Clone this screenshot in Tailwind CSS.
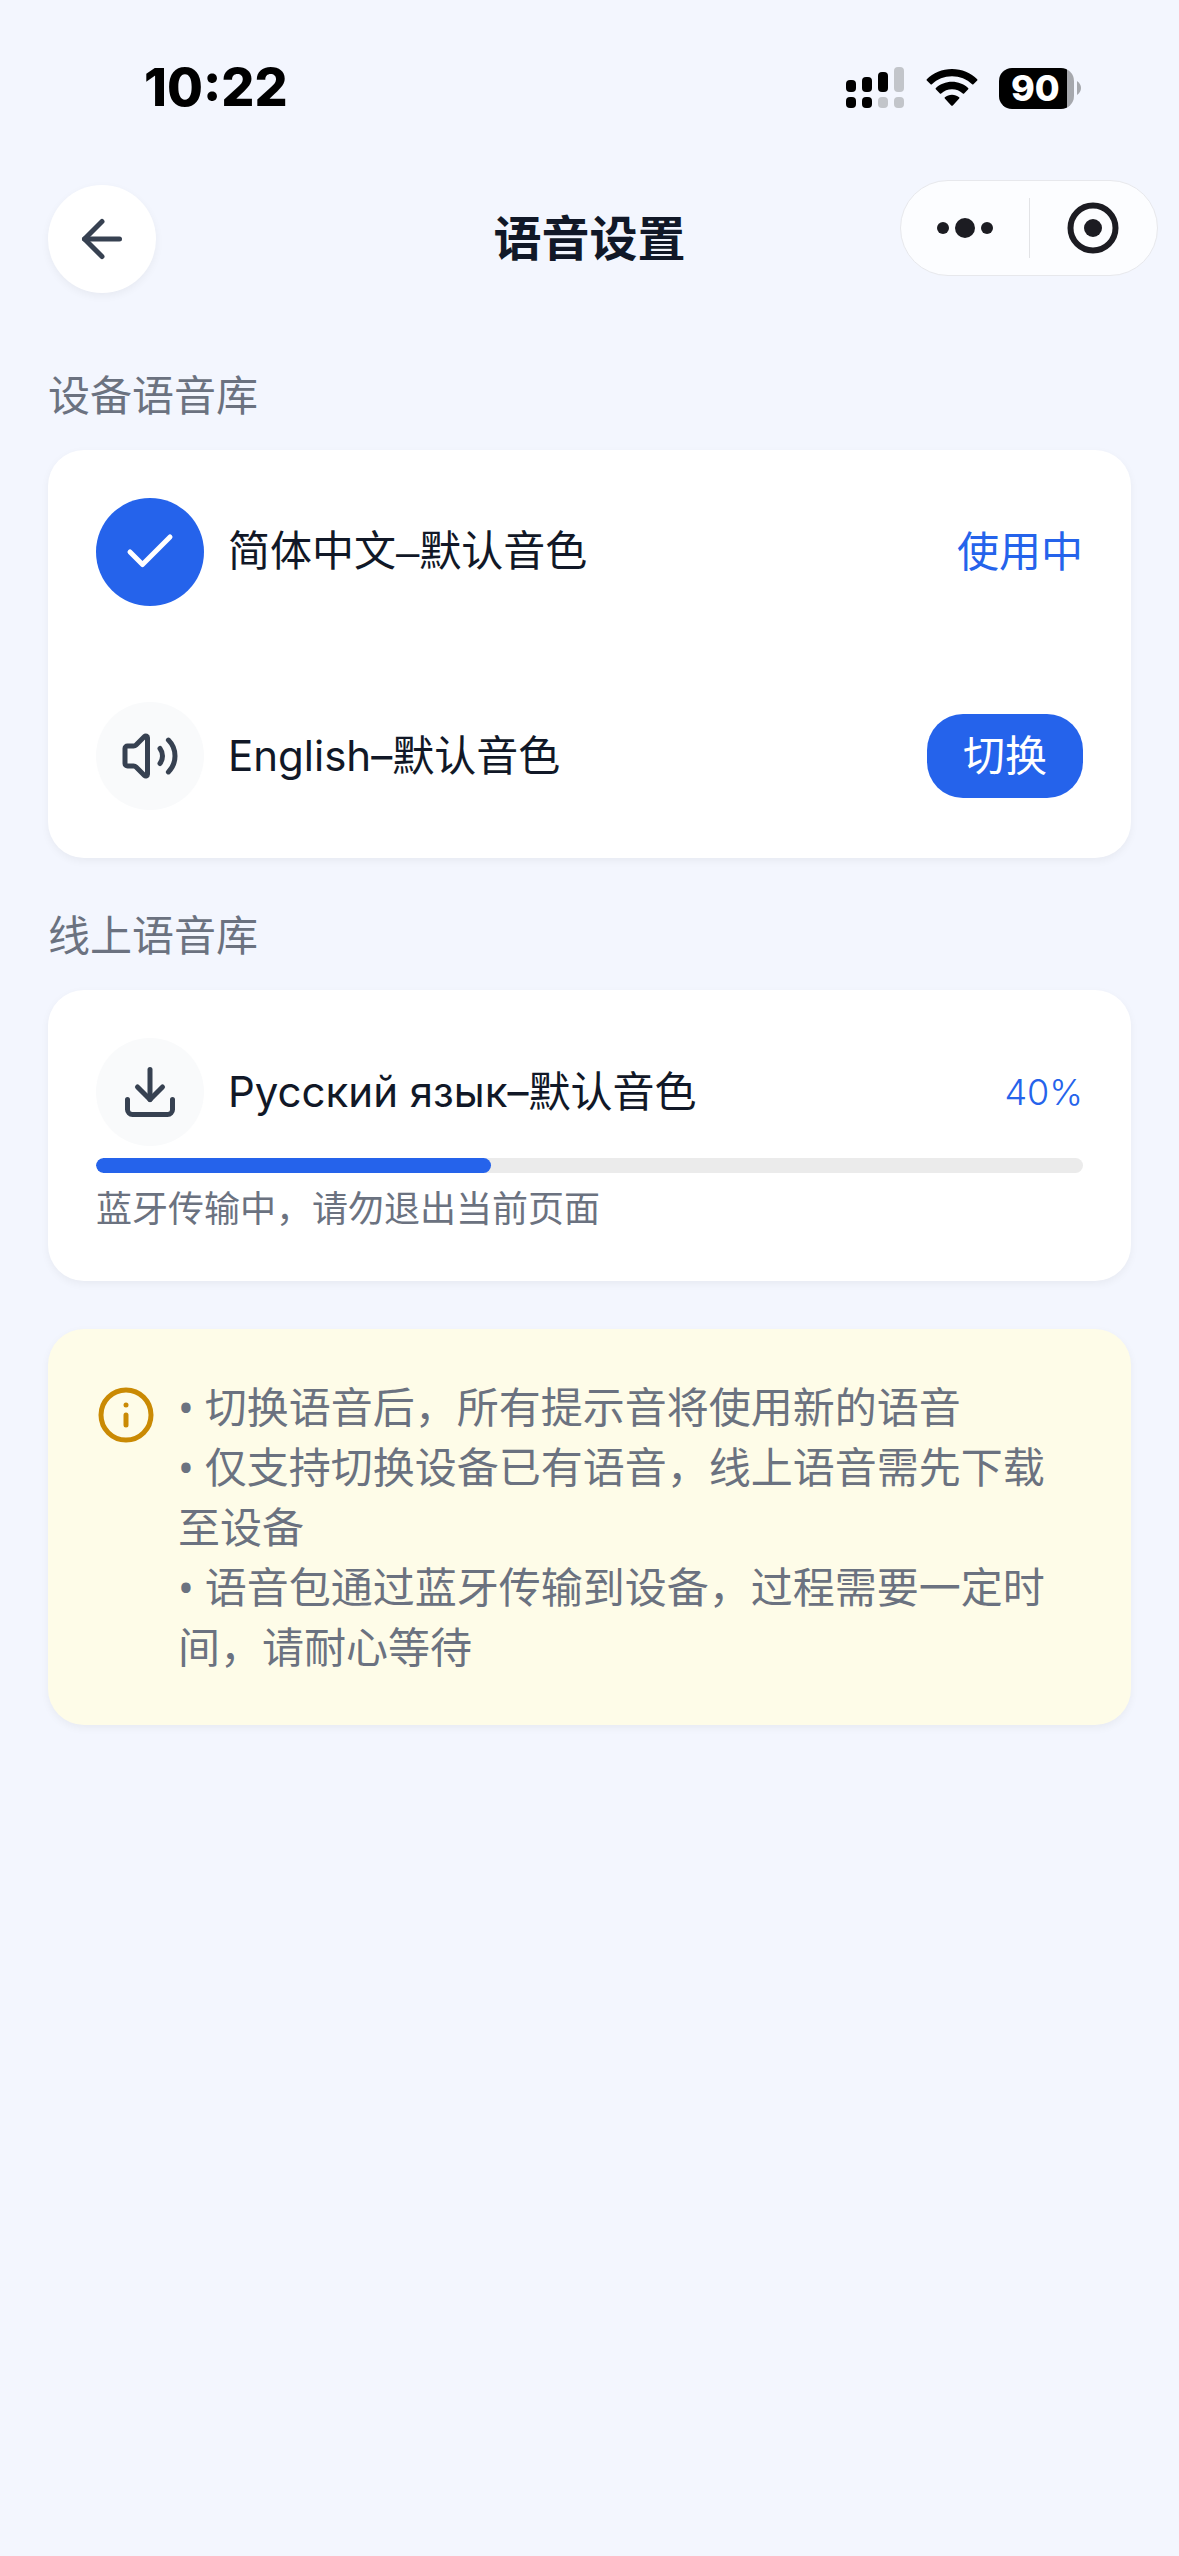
<!DOCTYPE html>
<html lang="zh-CN">
<head>
<meta charset="utf-8">
<meta name="viewport" content="width=device-width, initial-scale=1">
<title>语音设置</title>
<script src="https://cdn.jsdelivr.net/npm/@tailwindcss/browser@4"></script>
</head>
<body class="min-h-screen bg-[#f3f6fe] font-['Inter','Noto_Sans_CJK_SC',sans-serif] text-[42px] leading-[60px] text-[#111827]">

<!-- Status bar -->
<div class="flex h-[176px] items-center justify-between pl-[144px] pr-[98px]">
  <span class="text-[52px] font-extrabold text-black">10:22</span>
  <div class="flex items-center gap-[21px]">
    <svg class="h-[42px] w-[60px]" viewBox="0 0 60 42" aria-hidden="true">
      <g fill="#000">
        <rect x="1" y="13" width="10" height="12" rx="4"/>
        <rect x="17" y="10" width="10" height="15" rx="4"/>
        <rect x="33" y="5" width="10" height="20" rx="4"/>
        <rect x="1" y="30" width="10" height="11" rx="4"/>
        <rect x="17" y="30" width="10" height="11" rx="4"/>
      </g>
      <g fill="#c2c5ca">
        <rect x="49" y="0" width="10" height="25" rx="4"/>
        <rect x="33" y="30" width="10" height="11" rx="4"/>
        <rect x="49" y="30" width="10" height="11" rx="4"/>
      </g>
    </svg>
    <svg class="h-[42px] w-[52px]" viewBox="0 0 52 42" aria-hidden="true">
      <path d="M26 2C16.200 2 7 5.800 .8 12.200Q.2 12.900 .8 13.500L4.600 17.300Q5.200 17.900 5.900 17.300C11.200 12.200 18.300 9.300 26 9.300S40.800 12.200 46.100 17.300Q46.800 17.900 47.400 17.300L51.200 13.500Q51.800 12.900 51.200 12.200C45 5.800 35.800 2 26 2Z"/>
      <path d="M26 14.800C19.800 14.800 14.200 17.100 9.900 21Q9.200 21.700 9.800 22.300L13.900 26.400Q14.500 27 15.200 26.400C18.100 23.800 21.900 22.200 26 22.200S33.900 23.800 36.800 26.400Q37.500 27 38.100 26.400L42.200 22.300Q42.800 21.700 42.100 21C37.800 17.100 32.200 14.800 26 14.800Z"/>
      <path d="M26 27.700C23.300 27.700 20.800 28.700 18.900 30.200Q18.200 30.800 18.800 31.400L25.200 38.400Q26 39.200 26.800 38.400L33.200 31.400Q33.800 30.800 33.100 30.200C31.200 28.700 28.700 27.700 26 27.700Z"/>
    </svg>
    <div class="flex items-center gap-[3px]">
      <div class="flex h-[41px] w-[75px] items-center rounded-[13px] bg-linear-to-r from-black from-91% to-[#a6a8ad] to-91% pl-[12px] text-[36px] leading-none font-extrabold text-white">90</div>
      <svg class="h-[14px] w-[4px]" viewBox="0 0 4 14" aria-hidden="true"><path d="M0 0Q4 3 4 7T0 14Z" fill="#a6a8ad"/></svg>
    </div>
  </div>
</div>

<!-- Navigation bar -->
<header class="relative mt-[9px] mb-[73px] flex h-[108px] items-center px-12">
  <button type="button" aria-label="返回" class="flex size-[108px] items-center justify-center rounded-full bg-white text-[#374151] shadow-[0_3px_9px_rgba(0,0,0,0.05)]">
    <svg class="size-[60px]" viewBox="0 0 24 24" fill="none" stroke="currentColor" stroke-width="2" stroke-linecap="round" stroke-linejoin="round"><path d="m12 19-7-7 7-7"/><path d="M19 12H5"/></svg>
  </button>
  <h1 class="flex-1 text-center text-[48px] font-bold">语音设置</h1>
  <div class="w-[108px]"></div>
  <div class="absolute -top-[5px] right-[21px] flex h-24 w-[258px] items-center rounded-full border border-[#e7e8ec] bg-[#fcfdff] text-[#1c1c22]">
    <button type="button" aria-label="更多" class="flex flex-1 items-center justify-center gap-[6px]">
      <span class="size-3 rounded-full bg-current"></span>
      <span class="size-5 rounded-full bg-current"></span>
      <span class="size-3 rounded-full bg-current"></span>
    </button>
    <span class="h-[60px] w-px bg-[#e2e3e6]"></span>
    <button type="button" aria-label="关闭" class="flex flex-1 justify-center">
      <svg class="size-[52px]" viewBox="0 0 52 52"><circle cx="26" cy="26" r="22.500" fill="none" stroke="currentColor" stroke-width="6"/><circle cx="26" cy="26" r="9" fill="currentColor"/></svg>
    </button>
  </div>
</header>

<main class="px-12">
  <section>
    <h2 class="mb-6 text-[#6b7280]">设备语音库</h2>
    <ul class="rounded-[36px] bg-white shadow-[0_3px_9px_rgba(0,0,0,0.05)]">
      <li class="flex items-center gap-6 p-12">
        <span class="flex size-[108px] items-center justify-center rounded-full bg-[#2563eb] text-white">
          <svg class="size-[60px]" viewBox="0 0 24 24" fill="none" stroke="currentColor" stroke-width="2" stroke-linecap="round" stroke-linejoin="round" aria-hidden="true"><path d="M20 6 9 17l-5-5"/></svg>
        </span>
        <span class="flex-1 font-['Liberation_Sans','Noto_Sans_CJK_SC',sans-serif]">简体中文–默认音色</span>
        <span class="text-[#2563eb]">使用中</span>
      </li>
      <li class="flex items-center gap-6 p-12">
        <span class="flex size-[108px] items-center justify-center rounded-full bg-[#f9fafb] text-[#374151]">
          <svg class="size-[60px]" viewBox="0 0 24 24" fill="none" stroke="currentColor" stroke-width="2" stroke-linecap="round" stroke-linejoin="round" aria-hidden="true"><path d="M11 4.702a.705.705 0 0 0-1.203-.498L6.413 7.587A1.400 1.400 0 0 1 5.416 8H3a1 1 0 0 0-1 1v6a1 1 0 0 0 1 1h2.416a1.400 1.400 0 0 1 .997.413l3.383 3.384A.705.705 0 0 0 11 19.298z"/><path d="M16 9a5 5 0 0 1 0 6"/><path d="M19.364 18.364a9 9 0 0 0 0-12.728"/></svg>
        </span>
        <span class="flex-1">English–默认音色</span>
        <button type="button" class="rounded-[36px] bg-[#2563eb] px-9 py-3 text-white">切换</button>
      </li>
    </ul>
  </section>

  <section class="mt-12">
    <h2 class="mb-6 text-[#6b7280]">线上语音库</h2>
    <div class="rounded-[36px] bg-white p-12 shadow-[0_3px_9px_rgba(0,0,0,0.05)]">
      <div class="flex items-center gap-6">
        <span class="flex size-[108px] items-center justify-center rounded-full bg-[#f9fafb] text-[#374151]">
          <svg class="size-[60px]" viewBox="0 0 24 24" fill="none" stroke="currentColor" stroke-width="2" stroke-linecap="round" stroke-linejoin="round" aria-hidden="true"><path d="M12 15V3"/><path d="M21 15v4a2 2 0 0 1-2 2H5a2 2 0 0 1-2-2v-4"/><path d="m7 10 5 5 5-5"/></svg>
        </span>
        <span class="flex-1">Русский язык–默认音色</span>
        <span class="text-[36px] font-light text-[#2563eb]">40%</span>
      </div>
      <div role="progressbar" aria-label="下载进度" aria-valuenow="40" aria-valuemin="0" aria-valuemax="100" class="mt-3 h-[15px] overflow-hidden rounded-full bg-[#ebebeb]">
        <div class="h-full rounded-full bg-[#2563eb]" style="width:40%"></div>
      </div>
      <p class="mt-3 text-[36px] leading-[48px] text-[#6b7280]">蓝牙传输中，请勿退出当前页面</p>
    </div>
  </section>

  <section class="mt-12 flex gap-[22px] rounded-[36px] bg-[#fefce8] p-12 text-[#6b7280] shadow-[0_3px_9px_rgba(0,0,0,0.05)]">
    <svg class="mt-2 size-[60px] shrink-0 text-[#ca8a04]" viewBox="0 0 24 24" fill="none" stroke="currentColor" stroke-width="2" stroke-linecap="round" stroke-linejoin="round" aria-hidden="true"><circle cx="12" cy="12" r="10"/><path d="M12 16v-4"/><path d="M12 8h.01"/></svg>
    <div class="flex-1 font-['Noto_Sans','Noto_Sans_CJK_SC',sans-serif]">
      <p>• 切换语音后，所有提示音将使用新的语音</p>
      <p>• 仅支持切换设备已有语音，线上语音需先下载至设备</p>
      <p>• 语音包通过蓝牙传输到设备，过程需要一定时间，请耐心等待</p>
    </div>
  </section>
</main>
</body>
</html>
